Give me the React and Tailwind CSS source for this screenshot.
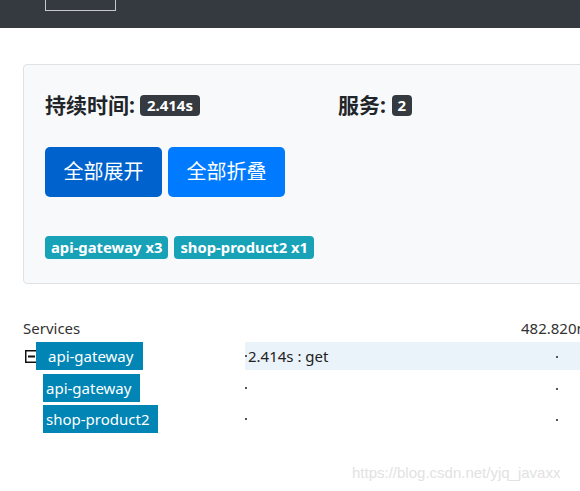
import React from 'react';

const latin = { fontFamily: '"Noto Sans", "Noto Sans CJK SC", sans-serif' };

const services = [
  { name: 'api-gateway', count: 3 },
  { name: 'shop-product2', count: 1 },
];

const MinusBox = () => (
  <svg width="13" height="13" viewBox="0 0 13 13" className="shrink-0">
    <rect x="0.75" y="0.75" width="11.5" height="11.5" fill="#fff" stroke="#111" strokeWidth="1.5" />
    <rect x="3" y="5.5" width="7" height="2" fill="#111" />
  </svg>
);

const Tick = () => <span className="block w-[2px] h-[2px] bg-[#555]" />;

export default function App() {
  return (
    <div className="relative h-[491px] w-[580px] overflow-hidden bg-white text-[#212529]" style={latin}>
      {/* 顶部导航 */}
      <div className="h-[28px] bg-[#343a40]">
        <div className="ml-[45px] w-[71px] h-[11px] border border-t-0 border-[#c6c8ca]" />
      </div>

      {/* 概览卡片 */}
      <div className="ml-[23px] mt-[36px] w-[700px] h-[220px] rounded-[4px] border border-[#dee2e6] bg-[#f8f9fa] pl-[21px] pt-[27px]">
        <div className="flex items-center h-[26px]">
          <div className="w-[293px] flex items-center">
            <span className="text-[21px] font-bold leading-none">持续时间:</span>
            <span className="ml-[5px] rounded-[4px] bg-[#343a40] px-[7px] h-[21px] flex items-center text-[15px] font-bold text-white leading-none">2.414s</span>
          </div>
          <div className="flex items-center">
            <span className="text-[21px] font-bold leading-none">服务:</span>
            <span className="ml-[6px] rounded-[4px] bg-[#343a40] w-[20px] h-[21px] flex items-center justify-center text-[15px] font-bold text-white leading-none">2</span>
          </div>
        </div>

        <div className="mt-[29px] flex gap-[6px]">
          <button className="w-[117px] h-[50px] rounded-[5px] bg-[#0062cc] text-white text-[20px]">全部展开</button>
          <button className="w-[117px] h-[50px] rounded-[5px] bg-[#007bff] text-white text-[20px]">全部折叠</button>
        </div>

        <div className="mt-[39px] flex gap-[6px]">
          {services.map((s) => (
            <span key={s.name} className="h-[23px] px-[6px] rounded-[4px] bg-[#17a2b8] text-white text-[14.8px] font-bold flex items-center leading-none">
              {s.name} x{s.count}
            </span>
          ))}
        </div>
      </div>

      {/* 服务时间线 */}
      <div className="ml-[23px] mt-[34px] text-[15px]">
        <div className="flex h-[20px] items-center">
          <span className="w-[222px] shrink-0 text-[#333]">Services</span>
          <span className="ml-[276px] shrink-0 whitespace-nowrap text-[#333]">482.820ms</span>
        </div>

        <div className="mt-[4px] flex h-[28px]">
          <div className="w-[222px] shrink-0 flex items-center">
            <span className="ml-[2px]"><MinusBox /></span>
            <span className="ml-[-2px] h-[28px] flex items-center bg-[#0085b5] text-white pl-[12px] pr-[10px]">api-gateway</span>
          </div>
          <div className="flex-1 bg-[#ebf3fa] flex items-center relative">
            <Tick />
            <span className="ml-[1px] text-[#222]">2.414s : get</span>
            <span className="absolute left-[311px] top-[14px]"><Tick /></span>
          </div>
        </div>

        <div className="mt-[4px] flex h-[28px]">
          <div className="w-[222px] shrink-0 flex items-center">
            <span className="ml-[20px] h-[28px] flex items-center bg-[#0085b5] text-white pl-[3px] pr-[9px]">api-gateway</span>
          </div>
          <div className="flex-1 flex items-center relative">
            <Tick />
            <span className="absolute left-[311px] top-[14px]"><Tick /></span>
          </div>
        </div>

        <div className="mt-[3px] flex h-[28px]">
          <div className="w-[222px] shrink-0 flex items-center">
            <span className="ml-[20px] h-[28px] flex items-center bg-[#0085b5] text-white pl-[3px] pr-[9px]">shop-product2</span>
          </div>
          <div className="flex-1 flex items-center relative">
            <Tick />
            <span className="absolute left-[311px] top-[14px]"><Tick /></span>
          </div>
        </div>
      </div>

      {/* 水印 */}
      <span className="absolute left-[352px] top-[462px] text-[15px] text-[#e2e2e2]" style={{ fontFamily: '"Liberation Sans", Arial, sans-serif' }}>
        https://blog.csdn.net/yjq_javaxx
      </span>
    </div>
  );
}
